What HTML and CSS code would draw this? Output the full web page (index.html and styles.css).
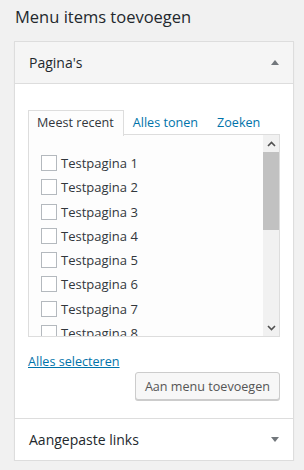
FILE: index.html
```html
<!DOCTYPE html>
<html lang="nl">
<head>
    <meta charset="UTF-8">
    <title>Menu items toevoegen</title>
    <link rel="stylesheet" href="styles.css">
</head>
<body>
    <div class="sidebar">
        <h2 class="title">Menu items toevoegen</h2>

        <div class="accordion">
            <div class="section open">
                <h3 class="section-title">Pagina's <span class="arrow up"></span></h3>
                <div class="section-body">
                    <ul class="tabs">
                        <li class="tab active">Meest recent</li>
                        <li class="tab"><a href="#">Alles tonen</a></li>
                        <li class="tab"><a href="#">Zoeken</a></li>
                    </ul>
                    <div class="panel">
                        <ul class="checklist">
                            <li><label><span class="check"></span>Testpagina 1</label></li>
                            <li><label><span class="check"></span>Testpagina 2</label></li>
                            <li><label><span class="check"></span>Testpagina 3</label></li>
                            <li><label><span class="check"></span>Testpagina 4</label></li>
                            <li><label><span class="check"></span>Testpagina 5</label></li>
                            <li><label><span class="check"></span>Testpagina 6</label></li>
                            <li><label><span class="check"></span>Testpagina 7</label></li>
                            <li><label><span class="check"></span>Testpagina 8</label></li>
                        </ul>
                        <div class="scrollbar">
                            <div class="scroll-btn">
                                <svg width="9" height="6" viewBox="0 0 9 6"><path d="M1 5 L4.5 1.5 L8 5" fill="none" stroke="#505050" stroke-width="1.6"/></svg>
                            </div>
                            <div class="scroll-thumb"></div>
                            <div class="scroll-track"></div>
                            <div class="scroll-btn">
                                <svg width="9" height="6" viewBox="0 0 9 6"><path d="M1 1 L4.5 4.5 L8 1" fill="none" stroke="#505050" stroke-width="1.6"/></svg>
                            </div>
                        </div>
                    </div>
                    <div class="actions">
                        <a href="#" class="select-all">Alles selecteren</a>
                        <button class="button">Aan menu toevoegen</button>
                    </div>
                </div>
            </div>
            <div class="section">
                <h3 class="section-title">Aangepaste links <span class="arrow down"></span></h3>
            </div>
        </div>
    </div>
</body>
</html>
```

FILE: styles.css
```css
body {
    margin: 0;
    padding: 0;
    background-color: #f1f1f1;
    color: #32373c;
    font-family: "Open Sans", "Noto Sans", sans-serif;
    font-size: 12.6px;
}

.sidebar {
    padding: 0 10px 0 14px;
}

.title {
    margin: 0;
    padding: 5px 0 0 1px;
    height: 41px;
    box-sizing: border-box;
    font-size: 16.5px;
    font-weight: 400;
    line-height: 24px;
    color: #23282d;
}

.accordion {
    background: #fff;
    border: 1px solid #dddddd;
    box-shadow: 0 1px 1px rgba(0,0,0,0.06);
}

.section + .section {
    border-top: 1px solid #dddddd;
}

.section-title {
    margin: 0;
    padding: 10px 14px 10px 14px;
    line-height: 21px;
    font-size: 14px;
    font-weight: 400;
    color: #23282d;
    display: flex;
    justify-content: space-between;
    align-items: center;
}

.section.open .section-title {
    background: #f5f5f5;
    border-bottom: 1px solid #dddddd;
}

.arrow {
    width: 0;
    height: 0;
    border-left: 4px solid transparent;
    border-right: 4px solid transparent;
}

.arrow.up {
    border-bottom: 5px solid #72777c;
}

.arrow.down {
    border-top: 5px solid #72777c;
}

.section-body {
    padding: 26px 13px 18px 13px;
}

.tabs {
    list-style: none;
    margin: 0;
    padding: 0;
    display: flex;
    height: 24px;
}

.tab {
    padding: 0 9px 0 8px;
    line-height: 24px;
    border: 1px solid transparent;
    border-bottom: none;
}

.tab a {
    color: #0073aa;
    text-decoration: none;
}

.tab.active {
    border-color: #dddddd;
    background: #fdfdfd;
    position: relative;
    z-index: 1;
    margin-bottom: -1px;
    height: 25px;
}

.panel {
    border: 1px solid #dddddd;
    background: #fdfdfd;
    height: 201px;
    overflow: hidden;
    display: flex;
}

.checklist {
    flex: 1;
    list-style: none;
    margin: 0;
    padding: 19px 0 0 12px;
}

.checklist li {
    height: 24.3px;
}

.checklist label {
    display: flex;
    align-items: center;
    height: 18px;
    line-height: 18px;
    font-size: 13px;
    color: #32373c;
}

.check {
    width: 14px;
    height: 14px;
    border: 1px solid #b4b9be;
    background: #fff;
    margin-right: 4px;
    flex-shrink: 0;
}

.scrollbar {
    width: 16px;
    display: flex;
    flex-direction: column;
    background: #f1f1f1;
}

.scroll-btn {
    height: 17px;
    display: flex;
    align-items: center;
    justify-content: center;
}

.scroll-thumb {
    height: 78px;
    background: #c1c1c1;
}

.scroll-track {
    flex: 1;
}

.actions {
    display: flex;
    flex-direction: column;
    align-items: flex-start;
}

.select-all {
    margin-top: 16px;
    color: #0073aa;
    line-height: 18px;
}

.button {
    align-self: flex-end;
    margin-top: 1px;
    height: 28px;
    padding: 0 9px;
    font-family: inherit;
    font-size: 12.6px;
    color: #555;
    background: #f7f7f7;
    border: 1px solid #cccccc;
    border-radius: 3px;
    box-shadow: 0 1px 0 #cccccc;
}
```
